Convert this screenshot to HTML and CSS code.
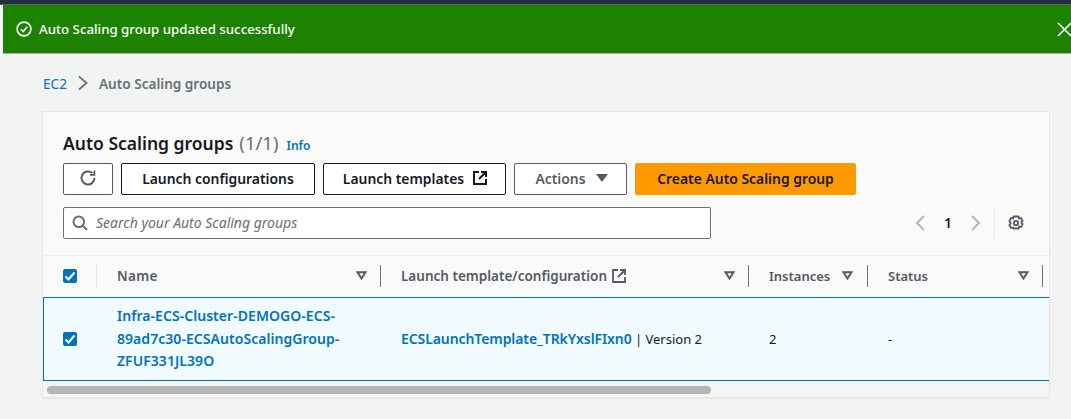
FILE: index.html
```html
<!DOCTYPE html>
<html lang="en">
<head>
    <meta charset="UTF-8">
    <meta name="viewport" content="width=device-width, initial-scale=1.0">
    <title>Auto Scaling groups</title>
    <link rel="stylesheet" href="styles.css">
</head>
<body>

<div class="topbar"></div>
<div class="main">
  <div class="flash">
    <svg class="flashIcon" width="16" height="16" viewBox="0 0 16 16" fill="none" stroke="#fff" stroke-width="1.6">
      <circle cx="8" cy="8" r="6.9"/>
      <path d="M4.8 8.2 7.2 10.6 11.2 5.8"/>
    </svg>
    <span class="flashText">Auto Scaling group updated successfully</span>
    <svg class="flashClose" width="15" height="15" viewBox="0 0 15 15" fill="none" stroke="#f2f3f3" stroke-width="1.7">
      <path d="M1 1 14 14M14 1 1 14"/>
    </svg>
  </div>

  <div class="crumbs">
    <a class="crumbLink">EC2</a>
    <svg width="12" height="16" viewBox="0 0 12 16" fill="none" stroke="#687078" stroke-width="1.8">
      <path d="M2 1.5 9.5 8 2 14.5"/>
    </svg>
    <span class="crumbCurrent">Auto Scaling groups</span>
  </div>

  <div class="panel">
    <div class="panelHead">
      <div class="titleRow">
        <h1 class="title">Auto Scaling groups</h1>
        <span class="count">(1/1)</span>
        <a class="info">Info</a>
      </div>
      <div class="actions">
        <button class="btn btnIcon">
          <svg width="18" height="18" viewBox="0 0 18 18" fill="none" stroke="#545b64" stroke-width="2">
            <path d="M15.500 9a6.500 6.500 0 1 1-2.200-4.900"/>
            <path d="M15.400 1.500v4.400h-4.400" stroke-width="1.800"/>
          </svg>
        </button>
        <button class="btn btnConfig">Launch configurations</button>
        <button class="btn btnTemplates">Launch templates
          <svg width="14" height="14" viewBox="0 0 14 14" fill="none" stroke="#16191f" stroke-width="2">
            <path d="M6 1H1v12h12V8M8 1h5v5M13 1 6 8"/>
          </svg>
        </button>
        <button class="btn btnActions">Actions <span class="caret"></span></button>
        <button class="btn btnPrimary">Create Auto Scaling group</button>
      </div>
      <div class="searchRow">
        <div class="search">
          <svg width="16" height="16" viewBox="0 0 16 16" fill="none" stroke="#687078" stroke-width="2">
            <circle cx="6.800" cy="6.800" r="5.300"/>
            <path d="M10.800 10.800 15 15"/>
          </svg>
          <span class="searchText">Search your Auto Scaling groups</span>
        </div>
        <div class="pager">
          <svg width="12" height="18" viewBox="0 0 12 18" fill="none" stroke="#aab7b8" stroke-width="2">
            <path d="M10 2 3 9l7 7"/>
          </svg>
          <span class="pageNum">1</span>
          <svg width="12" height="18" viewBox="0 0 12 18" fill="none" stroke="#aab7b8" stroke-width="2">
            <path d="M2 2l7 7-7 7"/>
          </svg>
          <span class="pagerLine"></span>
          <svg class="gear" width="16" height="16" viewBox="0 0 16 16" fill="none" stroke="#545b64" stroke-width="1.800">
            <circle cx="8" cy="8" r="2.200"/>
            <path d="M5.600 1.500h4.800l.6 1.900 2-.4 1.600 2.900-1.300 1.600 1.300 1.600-1.600 2.900-2-.4-.6 1.900H5.600L5 12.600l-2 .4-1.600-2.900L2.700 8.500 1.400 5.900 3 3l2 .4z"/>
          </svg>
        </div>
      </div>
    </div>

    <div class="tableHead">
      <div class="cell cellCheck">
        <span class="checkbox"><svg width="14" height="14" viewBox="0 0 14 14" fill="none" stroke="#fff" stroke-width="2"><path d="M2.500 7.500 5.500 10.500 11.500 3.500"/></svg></span>
        <span class="divider dividerLight"></span>
      </div>
      <div class="cell cellName">
        <span class="headName">Name</span>
        <svg class="sortIcon" width="11" height="9" viewBox="0 0 11 9" fill="none" stroke="#545b64" stroke-width="2"><path d="M1.500 1.200h8L5.500 7.500z"/></svg>
        <span class="divider"></span>
      </div>
      <div class="cell cellTemplate">
        <span class="headTemplate">Launch template/configuration</span>
        <svg class="headLink" width="14" height="14" viewBox="0 0 14 14" fill="none" stroke="#545b64" stroke-width="1.800">
          <path d="M6 1H1v12h12V8M8 1h5v5M13 1 6 8"/>
        </svg>
        <svg class="sortIcon" width="11" height="9" viewBox="0 0 11 9" fill="none" stroke="#545b64" stroke-width="2"><path d="M1.500 1.200h8L5.500 7.500z"/></svg>
        <span class="divider"></span>
      </div>
      <div class="cell cellInstances">
        <span>Instances</span>
        <svg class="sortIcon" width="11" height="9" viewBox="0 0 11 9" fill="none" stroke="#545b64" stroke-width="2"><path d="M1.500 1.200h8L5.500 7.500z"/></svg>
        <span class="divider"></span>
      </div>
      <div class="cell cellStatus">
        <span>Status</span>
        <svg class="sortIcon" width="11" height="9" viewBox="0 0 11 9" fill="none" stroke="#545b64" stroke-width="2"><path d="M1.500 1.200h8L5.500 7.500z"/></svg>
        <span class="divider"></span>
      </div>
    </div>

    <div class="tableRow">
      <div class="cell cellCheck">
        <span class="checkbox"><svg width="14" height="14" viewBox="0 0 14 14" fill="none" stroke="#fff" stroke-width="2"><path d="M2.500 7.500 5.500 10.500 11.500 3.500"/></svg></span>
      </div>
      <div class="cell cellName"><a class="rowLink">Infra-ECS-Cluster-DEMOGO-ECS-<br>89ad7c30-ECSAutoScalingGroup-<br>ZFUF331JL39O</a></div>
      <div class="cell cellTemplate"><a class="rowLink linkTemplate">ECSLaunchTemplate_TRkYxslFIxn0</a>&nbsp;| Version 2</div>
      <div class="cell cellInstances">2</div>
      <div class="cell cellStatus">-</div>
    </div>

    <div class="scrollTrack"><div class="scrollThumb"></div></div>
  </div>
</div>

</body>
</html>
```

FILE: styles.css
```css
body, html {
  margin: 0;
  padding: 0;
  width: 100vw;
  height: 100vh;
  overflow: hidden;
  background-color: #f2f3f3;
  font-family: 'Noto Sans', sans-serif;
  font-size: 14px;
  color: #16191f;
}

.topbar {
  height: 4px;
  background-color: #232f3e;
  border-bottom: 1px solid #5a6060;
}

.main {
  margin-left: 3px;
}

.flash {
  display: flex;
  align-items: center;
  height: 48px;
  padding: 0 0 0 13px;
  background-color: #1d8102;
  border-bottom: 1px solid #a9b0ac;
  color: white;
}

.flashText {
  margin-left: 7px;
  font-size: 13.25px;
  font-weight: 500;
}

.flashClose {
  margin-left: auto;
  margin-right: -1px;
}

.crumbs {
  display: flex;
  align-items: center;
  gap: 10px;
  height: 22px;
  margin: 18px 0 0 40px;
  font-size: 13.6px;
}

.crumbLink {
  color: #0073bb;
}

.crumbCurrent {
  color: #687078;
  font-weight: 600;
}

.panel {
  width: 1006px;
  margin: 18px 0 0 40px;
  background-color: #fafafa;
  box-shadow: 0 0 0 1px #e4e7e7, 0 1px 1px 0 rgba(0, 28, 36, 0.3);
}

.panelHead {
  padding: 18px 0 0 20px;
  height: 144px;
  box-sizing: border-box;
  border-bottom: 1px solid #eaeded;
}

.titleRow {
  display: flex;
  align-items: baseline;
  height: 24px;
}

.title {
  margin: 0;
  font-size: 17.5px;
  font-weight: 600;
  line-height: 24px;
}

.count {
  margin-left: 6px;
  font-size: 18.5px;
  color: #687078;
}

.info {
  margin-left: 8px;
  font-size: 12px;
  font-weight: 600;
  color: #0073bb;
}

.actions {
  display: flex;
  gap: 8px;
  margin-top: 9px;
}

.btn {
  display: flex;
  align-items: center;
  justify-content: center;
  height: 32px;
  padding: 0 0 2px;
  box-sizing: border-box;
  background-color: white;
  border: 1px solid #16191f;
  border-radius: 2px;
  font-family: inherit;
  font-size: 13.9px;
  font-weight: 600;
  color: #16191f;
}

.btnIcon {
  width: 50px;
  border-color: #545b64;
}

.btnConfig {
  width: 194px;
}

.btnTemplates {
  width: 183px;
  gap: 9px;
  padding-left: 1px;
}

.btnActions {
  width: 113px;
  gap: 10px;
  padding-left: 2px;
  color: #545b64;
  border-color: #545b64;
}

.caret {
  width: 0;
  height: 0;
  border-left: 6px solid transparent;
  border-right: 6px solid transparent;
  border-top: 8px solid #545b64;
}

.btnPrimary {
  width: 221px;
  background-color: #ff9900;
  border-color: #ff9900;
}

.searchRow {
  display: flex;
  align-items: center;
  margin-top: 12px;
}

.search {
  display: flex;
  align-items: center;
  gap: 8px;
  width: 648px;
  height: 32px;
  padding-left: 8px;
  box-sizing: border-box;
  background-color: white;
  border: 1px solid #687078;
  border-radius: 2px;
}

.searchText {
  padding-bottom: 2px;
  font-style: italic;
  color: #687078;
}

.pager {
  display: flex;
  align-items: center;
  margin-left: 203px;
}

.pageNum {
  width: 44px;
  padding-bottom: 2px;
  text-align: center;
  font-weight: 600;
}

.pagerLine {
  width: 1px;
  height: 32px;
  margin: 0 13px 0 12px;
  background-color: #eaeded;
}

.tableHead, .tableRow {
  display: flex;
  box-sizing: border-box;
}

.tableHead {
  height: 42px;
  padding-bottom: 2px;
  font-size: 13px;
  font-weight: 600;
  color: #545b64;
  border-bottom: 1px solid #eaeded;
}

.tableRow {
  height: 84px;
  background-color: #f1faff;
  border: 1px solid #0073bb;
  border-right: 0;
  margin-top: -1px;
  font-size: 13px;
  color: #16191f;
}

.cell {
  position: relative;
  display: flex;
  align-items: center;
  box-sizing: border-box;
  padding-left: 20px;
}

.cellCheck {
  width: 54px;
}

.cellName {
  width: 284px;
  padding-right: 14px;
}

.cellTemplate {
  width: 368px;
  padding-right: 14px;
}

.cellInstances {
  width: 119px;
  padding-right: 15px;
}

.cellStatus {
  width: 175px;
  padding-right: 14px;
}

.tableRow .cellCheck {
  width: 53px;
  padding-left: 19px;
}

.headName {
  font-size: 13.5px;
  letter-spacing: 0.3px;
}

.headTemplate {
  font-size: 13.5px;
}

.headLink {
  margin-left: 5px;
}

.sortIcon {
  margin-left: auto;
}

.divider {
  position: absolute;
  right: 0;
  top: 9px;
  width: 1px;
  height: 22px;
  background-color: #687078;
}

.dividerLight {
  background-color: #e2e5e5;
}

.checkbox {
  display: flex;
  align-items: center;
  justify-content: center;
  width: 14px;
  height: 14px;
  background-color: #0073bb;
  border-radius: 2px;
}

.rowLink {
  color: #0073bb;
  font-size: 14px;
  font-weight: 600;
  line-height: 22.5px;
  letter-spacing: 0.05px;
}

.linkTemplate {
  letter-spacing: -0.09px;
}

.scrollTrack {
  height: 16px;
  padding: 5px 0 0 4px;
  box-sizing: border-box;
  background-color: #f5f5f5;
}

.scrollThumb {
  width: 664px;
  height: 8px;
  background-color: #b5b5b5;
  border-radius: 4px;
}
```
